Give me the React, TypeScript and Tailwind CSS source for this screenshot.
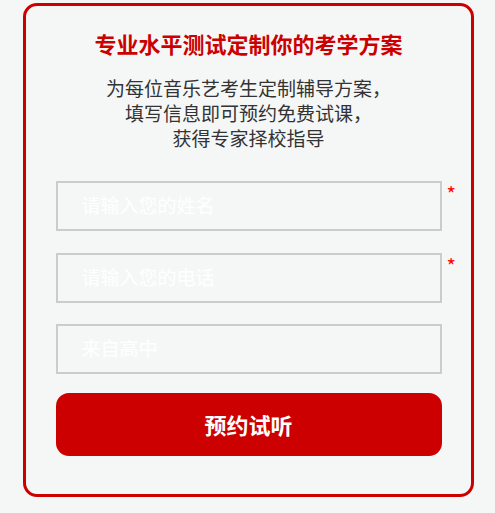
import React from "react";

const font = { fontFamily: '"Noto Sans CJK SC", "Noto Sans", sans-serif' };

function Field({ placeholder, required, className = "" }: { placeholder: string; required?: boolean; className?: string }) {
  return (
    <div className={`relative w-[386px] h-[50px] ${className}`}>
      <input
        placeholder={placeholder}
        className="w-full h-full border-2 border-[#cccccc] bg-transparent pl-[24px] pb-[3px] text-[19px] text-[#333] placeholder:text-white outline-none"
      />
      {required && (
        <span className="absolute left-[391px] top-[3px] text-[20px] leading-[20px] text-[#ff0000]">*</span>
      )}
    </div>
  );
}

export default function App() {
  return (
    <div className="w-full h-[513px] bg-[#f5f7f7] pt-[3px] pl-[23px]" style={font}>
      <div className="w-[451px] h-[494px] border-[3px] border-[#cc0000] rounded-[14px] flex flex-col items-center pt-[22px]">
        <h1 className="text-[22px] leading-[30px] font-bold text-[#cc0000]">专业水平测试定制你的考学方案</h1>
        <p className="mt-[17px] text-[19px] leading-[25px] text-[#333333] text-center">
          为每位音乐艺考生定制辅导方案，
          <br />
          填写信息即可预约免费试课，
          <br />
          获得专家择校指导
        </p>
        <Field placeholder="请输入您的姓名" required className="mt-[31px]" />
        <Field placeholder="请输入您的电话" required className="mt-[22px]" />
        <Field placeholder="来自高中" className="mt-[21px]" />
        <button className="mt-[19px] w-[386px] h-[63px] rounded-[13px] bg-[#cc0000] text-white text-[22px] font-bold">
          预约试听
        </button>
      </div>
    </div>
  );
}
